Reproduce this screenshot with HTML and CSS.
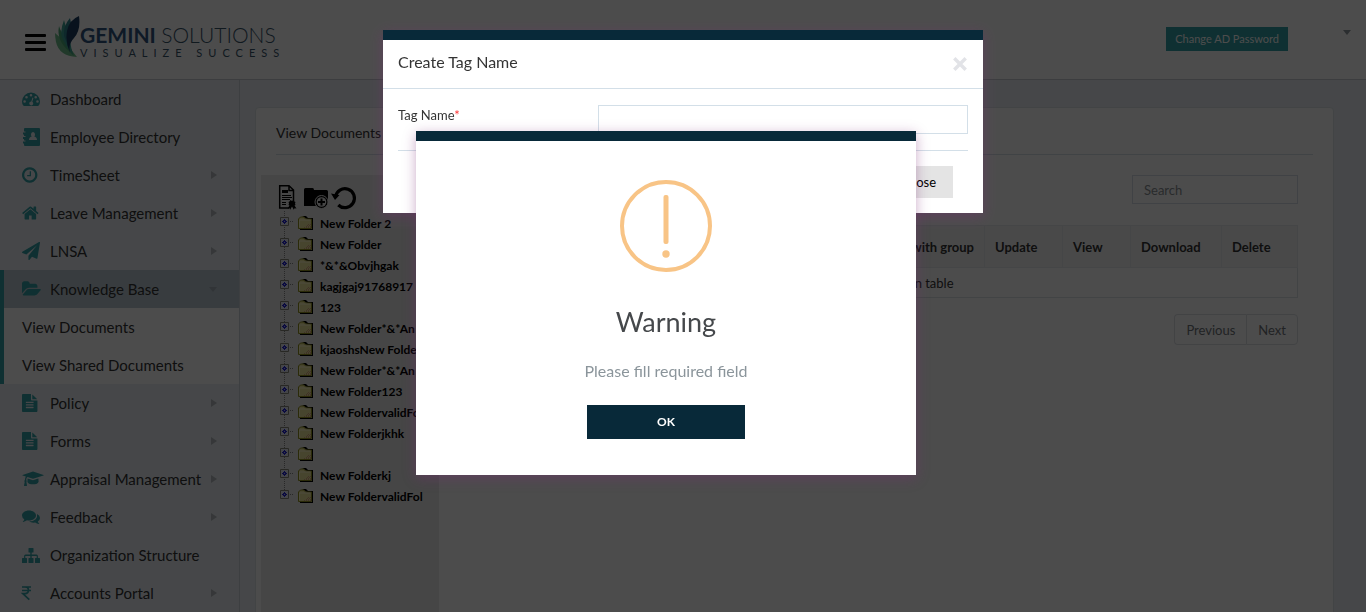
FILE: index.html
```html
<!DOCTYPE html>
<html lang="en">
<head>
<meta charset="utf-8">
<meta name="viewport" content="width=device-width, initial-scale=1">
<title>View Documents</title>
<link rel="stylesheet" href="styles.css">
</head>
<body>
<svg class="sprite" aria-hidden="true">
  <symbol id="i-dash" viewBox="0 0 18 18"><path fill-rule="evenodd" d="M0 11.500A9 9 0 1 1 18 11.500Q18 13.800 16.700 15.600Q16.400 16 16 16H2Q1.600 16 1.300 15.600Q0 13.800 0 11.500zM1.300 11.500a1.300 1.300 0 1 0 2.600 0a1.300 1.300 0 1 0-2.600 0zM3.200 7.200a1.300 1.300 0 1 0 2.600 0a1.300 1.300 0 1 0-2.600 0zM7.700 5.300a1.300 1.300 0 1 0 2.600 0a1.300 1.300 0 1 0-2.600 0zM12.400 7.200a1.300 1.300 0 1 0 2.600 0a1.300 1.300 0 1 0-2.600 0zM14.200 11.500a1.300 1.300 0 1 0 2.600 0a1.300 1.300 0 1 0-2.600 0zM10.500 7.600L9.300 11.400A2 2 0 1 0 10.300 11.700L11.400 7.900z"/></symbol>
  <symbol id="i-book" viewBox="0 0 18 18"><path fill-rule="evenodd" d="M3 0H17Q18 0 18 1V17Q18 18 17 18H3Q2 18 2 17V15.500H1V13.500H3.500V12.500H2V11H1V9H3.500V8H2V6.500H1V4.500H3.500V3.500H2V1Q2 0 3 0zM11 4A2.100 2.500 0 0 0 9.700 8.400Q7 9 7 12H15Q15 9 12.300 8.400A2.100 2.500 0 0 0 11 4z"/></symbol>
  <symbol id="i-clock" viewBox="128 0 1792 1792"><path d="M1024 544v448q0 14-9 23t-23 9h-320q-14 0-23-9t-9-23v-64q0-14 9-23t23-9h224v-352q0-14 9-23t23-9h64q14 0 23 9t9 23zm416 352q0-148-73-273t-198-198-273-73-273 73-198 198-73 273 73 273 198 198 273 73 273-73 198-198 73-273zm224 0q0 209-103 385.500t-279.500 279.500-385.500 103-385.500-103-279.500-279.500-103-385.500 103-385.500 279.500-279.500 385.500-103 385.500 103 279.500 279.500 103 385.500z"/></symbol>
  <symbol id="i-home" viewBox="64 0 1792 1792"><path d="M1472 992v480q0 26-19 45t-45 19h-384v-384h-256v384h-384q-26 0-45-19t-19-45v-480q0-1 .5-3t.5-3l575-474 575 474q1 2 1 6zm223-69l-62 74q-8 9-21 11h-3q-13 0-21-7l-692-577-692 577q-12 8-24 7-13-2-21-11l-62-74q-8-10-7-23.500t11-21.500l719-599q32-26 76-26t76 26l244 204v-195q0-14 9-23t23-9h192q14 0 23 9t9 23v408l219 182q10 8 11 21.500t-7 23.500z"/></symbol>
  <symbol id="i-plane" viewBox="0 0 1792 1792"><path d="M1764 11q33 24 27 64l-256 1536q-5 29-32 45-14 8-31 8-11 0-24-5l-453-185-242 295q-18 23-49 23-13 0-22-4-19-7-30.500-23.500t-11.500-36.500v-349l864-1059-1069 925-395-162q-37-14-40-55-2-40 32-59l1664-960q15-9 32-9 20 0 36 11z"/></symbol>
  <symbol id="i-open" viewBox="0 0 1792 1792"><path d="M1879 952q0 31-31 66l-336 396q-43 51-120.500 86.500t-143.500 35.500h-1088q-34 0-60.500-13t-26.500-43q0-31 31-66l336-396q43-51 120.500-86.500t143.500-35.500h1088q34 0 60.500 13t26.500 43zm-343-344v160h-832q-94 0-197 47.500t-164 119.500l-337 396-5 6q0-4-.5-12.500t-.5-12.500v-960q0-92 66-158t158-66h320q92 0 158 66t66 158v32h544q92 0 158 66t66 158z"/></symbol>
  <symbol id="i-file" viewBox="128 0 1792 1792"><path d="M1596 476q14 14 28 36h-472v-472q22 14 36 28zm-476 164h544v1056q0 40-28 68t-68 28h-1344q-40 0-68-28t-28-68v-1600q0-40 28-68t68-28h800v544q0 40 28 68t68 28zm160 736v-64q0-14-9-23t-23-9h-704q-14 0-23 9t-9 23v64q0 14 9 23t23 9h704q14 0 23-9t9-23zm0-256v-64q0-14-9-23t-23-9h-704q-14 0-23 9t-9 23v64q0 14 9 23t23 9h704q14 0 23-9t9-23zm0-256v-64q0-14-9-23t-23-9h-704q-14 0-23 9t-9 23v64q0 14 9 23t23 9h704q14 0 23-9t9-23z"/></symbol>
  <symbol id="i-cap" viewBox="0 0 18 18"><path d="M11 1.500L21.500 4.900Q22 5.200 21.500 5.500L11 8.700L5.500 7Q4.300 7.800 4.200 9.900Q5.200 10.800 4.400 11.900L5 15.600Q5 16 4.600 16H2.300Q1.900 16 2 15.600L2.700 11.900Q1.800 10.800 2.900 9.900Q3 7.600 3.900 6.500L.6 5.500Q0 5.200 .6 4.900zM5.600 8.600L11 10.300L16.400 8.600L16.600 11.700Q16.400 13.200 14.300 13.900Q11 14.800 7.700 13.900Q5.500 13.200 5.400 11.700z"/></symbol>
  <symbol id="i-chat" viewBox="0 0 18 18"><path d="M7 2.500C10.900 2.500 14 4.700 14 7.500S10.900 12.500 7 12.500Q6 12.500 5 12.300Q3.200 13.700 1 13.900Q.6 13.700 1 13.300Q2.100 12.500 2.300 11.200Q0 9.800 0 7.500C0 4.700 3.100 2.500 7 2.500zM15 6Q18 7.500 18 9.900Q18 12 15.800 13.400Q16 14.500 17.200 15.600Q17.500 16 17 16.100Q14.800 15.900 13.200 14.500Q9.600 15.100 7 13.500Q11.300 13.400 13.700 11.200Q15.700 9.300 15 6z"/></symbol>
  <symbol id="i-site" viewBox="0 0 18 18"><path d="M7 2H11Q11.500 2 11.500 2.500V6Q11.500 6.500 11 6.500H9.700V8.500H14.500Q15.900 8.500 15.900 10V12H17.300Q18 12 18 12.600V16.400Q18 17 17.400 17H13.600Q13 17 13 16.400V12.600Q13 12 13.600 12H14.700V10H9.700V12H11Q11.500 12 11.500 12.600V16.400Q11.500 17 11 17H7Q6.500 17 6.500 16.400V12.600Q6.500 12 7 12H8.300V10H3.300V12H4.400Q5 12 5 12.600V16.400Q5 17 4.400 17H.6Q0 17 0 16.400V12.600Q0 12 .6 12H2.100V10Q2.100 8.500 3.500 8.500H8.300V6.500H7Q6.500 6.500 6.500 6V2.500Q6.500 2 7 2z"/></symbol>
  <symbol id="i-inr" viewBox="0 0 18 18"><path fill="none" stroke="currentColor" stroke-width="1.700" d="M0 3H9M0 6.500H9M0 3H3Q6.500 3 6.500 6.300Q6.500 9.600 3 9.600H.8L7.300 15.700"/></symbol>
  <symbol id="i-folder" viewBox="0 0 16 14"><path fill="#000" d="M4 0h4l2 2h5v12H2v-1h12V3H9z"/><path fill="#efe69c" stroke="#8f8f20" d="M.5 12.500h13v-9.500h-6l-1.500-2h-3.500l-2 2z"/><path stroke="#fffbd0" fill="none" d="M1.500 11.500v-7.500h11"/><path stroke="#dba984" stroke-dasharray="1 1" d="M6 11.500h7M8 10.500h5M9 9.500h4M10 8.500h3"/></symbol>
  <symbol id="i-plus" viewBox="0 0 14 9"><path fill="#e4e6f4" stroke="#88887a" d="M.5.5h8v8h-8z"/><path fill="#2525d8" d="M4 2h1v1h1v1h1v1h-1v1h-1v1h-1v-1h-1v-1h-1v-1h1v-1h1z"/><path fill="#b9bbef" d="M4 4h1v1h-1z"/><path stroke="#888" stroke-dasharray="1 1" d="M10 4.500h4"/></symbol>
</svg>

<div class="app">
  <header class="top">
    <button class="burger" type="button" aria-label="Toggle menu"><span></span><span></span><span></span></button>
    <div class="logo">
      <svg class="leaf" viewBox="0 0 25 42" aria-hidden="true">
        <path fill="#6fc08c" d="M0 17Q9 24 22 41Q4 40 1 26Q0 21 0 17z"/>
        <path fill="#4dac79" d="M4 10Q1 25 15 36L19 40Q14 26 11 22Q6 17 4 10z"/>
        <path fill="#3fa497" d="M9 4Q4 17 8 24Q12 32 18 39Q14 25 16 19Q11 13 9 4z"/>
        <path fill="#2f8790" d="M15 2Q8 10 9 20Q13 30 14 31Q15 21 19 16Q16 10 15 2z"/>
        <path fill="#1c3f63" d="M24 0Q26 14 19 22Q13 28 15 37Q10 26 12 15Q14 4 24 0z"/>
      </svg>
      <div>
        <div class="brand"><b>GEMINI</b> <span>SOLUTIONS</span></div>
        <div class="tagline">VISUALIZE SUCCESS</div>
      </div>
    </div>
    <button class="password" type="button">Change AD Password</button>
    <button class="caret" type="button" aria-label="Account menu"></button>
  </header>

  <div class="body">
    <nav class="side">
      <a href="#"><svg><use href="#i-dash"/></svg>Dashboard</a>
      <a href="#"><svg><use href="#i-book"/></svg>Employee Directory</a>
      <a href="#" class="more"><svg><use href="#i-clock"/></svg>TimeSheet</a>
      <a href="#" class="more"><svg><use href="#i-home"/></svg>Leave Management</a>
      <a href="#" class="more"><svg><use href="#i-plane"/></svg>LNSA</a>
      <div class="group">
        <a href="#" class="more open"><svg><use href="#i-open"/></svg>Knowledge Base</a>
        <a href="#" class="sub">View Documents</a>
        <a href="#" class="sub">View Shared Documents</a>
      </div>
      <a href="#" class="more"><svg><use href="#i-file"/></svg>Policy</a>
      <a href="#" class="more"><svg><use href="#i-file"/></svg>Forms</a>
      <a href="#" class="more"><svg><use href="#i-cap"/></svg>Appraisal Management</a>
      <a href="#" class="more"><svg><use href="#i-chat"/></svg>Feedback</a>
      <a href="#"><svg><use href="#i-site"/></svg>Organization Structure</a>
      <a href="#" class="more"><svg><use href="#i-inr"/></svg>Accounts Portal</a>
    </nav>

    <main class="main">
      <section class="card">
        <h1>View Documents</h1>
        <div class="columns">
          <aside class="tree">
            <div class="tools">
              <button type="button" aria-label="Create tag"><svg viewBox="0 0 24 26"><path fill="none" stroke="#000" stroke-width="1.500" d="M17.500 17V6L13 1.700H3.700V24H13M13 2V6.500H17.500"/><path d="M6 6h6v3H6zM6 11h9v1H6zM6 13h10v1H6zM6 15h8v1H6zM6 18h4v1H6zM6 20h4v1H6z"/><path d="M14.500 16l1.500 1 1.500-1 1 1.500 1 .5-.5 1.500.5 1.500-1 .5 2 3-2-.3-.7 1.600-1.800-3.300-1.800 3.300-.7-1.600-2 .3 2-3-1-.5.500-1.500-.5-1.500 1-.5z"/></svg></button>
              <button type="button" aria-label="New folder"><svg viewBox="0 0 24 26"><path d="M0 5.500Q0 4 1.500 4H8.500Q10 4 10 6H22.500Q24 6 24 7.500V20H12V22H0z"/><circle cx="17.500" cy="18" r="6.500" stroke="#ececec" stroke-width="1"/><circle cx="17.500" cy="18" r="4.800" fill="#ececec"/><path stroke="#000" stroke-width="2" d="M17.500 14.500v7M14 18h7"/></svg></button>
              <button type="button" aria-label="Reload"><svg viewBox="0 0 24 26"><path fill="none" stroke="#000" stroke-width="3.200" d="M3.500 13A9.500 9.500 0 1 1 6.300 21"/><path d="M-1 9.500L7.500 11L3 16z"/></svg></button>
            </div>
            <ul>
              <li><svg class="plus"><use href="#i-plus"/></svg><svg class="fold"><use href="#i-folder"/></svg><a href="#">New Folder 2</a></li>
              <li><svg class="plus"><use href="#i-plus"/></svg><svg class="fold"><use href="#i-folder"/></svg><a href="#">New Folder</a></li>
              <li><svg class="plus"><use href="#i-plus"/></svg><svg class="fold"><use href="#i-folder"/></svg><a href="#">*&amp;*&amp;Obvjhgak</a></li>
              <li><svg class="plus"><use href="#i-plus"/></svg><svg class="fold"><use href="#i-folder"/></svg><a href="#">kagjgaj91768917</a></li>
              <li><svg class="plus"><use href="#i-plus"/></svg><svg class="fold"><use href="#i-folder"/></svg><a href="#">123</a></li>
              <li><svg class="plus"><use href="#i-plus"/></svg><svg class="fold"><use href="#i-folder"/></svg><a href="#">New Folder*&amp;*An</a></li>
              <li><svg class="plus"><use href="#i-plus"/></svg><svg class="fold"><use href="#i-folder"/></svg><a href="#">kjaoshsNew Folder</a></li>
              <li><svg class="plus"><use href="#i-plus"/></svg><svg class="fold"><use href="#i-folder"/></svg><a href="#">New Folder*&amp;*An</a></li>
              <li><svg class="plus"><use href="#i-plus"/></svg><svg class="fold"><use href="#i-folder"/></svg><a href="#">New Folder123</a></li>
              <li><svg class="plus"><use href="#i-plus"/></svg><svg class="fold"><use href="#i-folder"/></svg><a href="#">New FoldervalidFo</a></li>
              <li><svg class="plus"><use href="#i-plus"/></svg><svg class="fold"><use href="#i-folder"/></svg><a href="#">New Folderjkhk</a></li>
              <li><svg class="plus"><use href="#i-plus"/></svg><svg class="fold"><use href="#i-folder"/></svg></li>
              <li><svg class="plus"><use href="#i-plus"/></svg><svg class="fold"><use href="#i-folder"/></svg><a href="#">New Folderkj</a></li>
              <li><svg class="plus"><use href="#i-plus"/></svg><svg class="fold"><use href="#i-folder"/></svg><a href="#">New FoldervalidFol</a></li>
            </ul>
          </aside>
          <div class="docs">
            <input class="search" type="search" placeholder="Search" aria-label="Search">
            <table>
              <colgroup><col><col class="c-update"><col class="c-view"><col class="c-download"><col class="c-delete"></colgroup>
              <thead><tr><th class="end">Share with group</th><th>Update</th><th>View</th><th>Download</th><th>Delete</th></tr></thead>
              <tbody><tr><td colspan="5">No data available in table</td></tr></tbody>
            </table>
            <div class="pager"><button type="button">Previous</button><button type="button">Next</button></div>
          </div>
        </div>
      </section>
    </main>
  </div>
</div>

<div class="shade">
  <form class="modal" role="dialog" aria-labelledby="modal-title">
    <div class="modal-head">
      <h2 id="modal-title">Create Tag Name</h2>
      <button type="button" aria-label="Close dialog"><svg viewBox="0 0 14 14"><path d="M2 2L12 12M12 2L2 12"/></svg></button>
    </div>
    <div class="modal-body">
      <div class="field"><label for="tag">Tag Name<span>*</span></label><input id="tag" type="text"></div>
      <div class="actions"><button type="button">Close</button></div>
    </div>
  </form>
</div>

<div class="alert-layer">
  <div class="alert" role="alertdialog" aria-labelledby="alert-title">
    <svg viewBox="0 0 92 92" aria-hidden="true"><circle cx="46" cy="46" r="44" fill="none" stroke="#f8c486" stroke-width="4"/><rect x="43.500" y="15" width="5" height="49" rx="2" fill="#f8c486"/><circle cx="46" cy="74" r="3.700" fill="#f8c486"/></svg>
    <h2 id="alert-title">Warning</h2>
    <p>Please fill required field</p>
    <button type="button">OK</button>
  </div>
</div>
</body>
</html>
```
FILE: styles.css
```css
* { box-sizing: border-box; }
body { margin: 0; font: 13px/20px Lato, "Open Sans", sans-serif; color: #343434; }
h1, h2, p, ul { margin: 0; padding: 0; font-weight: 400; }
button, input { font: inherit; color: inherit; margin: 0; border-radius: 0; }
button { cursor: pointer; border: 0; background: none; padding: 0; }
a { color: inherit; text-decoration: none; }
.sprite { position: absolute; width: 0; height: 0; }
symbol { overflow: visible; }

.app { display: flex; flex-direction: column; height: 100vh; overflow: hidden; background: #eaeff3; }
.top { display: flex; align-items: flex-start; flex: none; height: 80px; padding: 0 15px 0 25px; background: #fff; border-bottom: 1px solid #c8cdd2; }
.burger { display: grid; gap: 4px; width: 21px; margin-top: 34px; }
.burger span { height: 3px; background: #000; border-radius: 1px; }
.logo { display: flex; margin: 16px auto 0 9px; }
.leaf { width: 25px; height: 42px; }
.brand { margin-top: 7px; font-size: 21px; line-height: 24px; white-space: nowrap; color: #38546a; }
.brand b { color: #2f567f; }
.brand span { font-weight: 300; }
.tagline { font-size: 11px; line-height: 12px; letter-spacing: 6px; color: #38546a; white-space: nowrap; }
.password { height: 24px; margin: 27px 55px 0 0; padding: 0 9px; background: #32a0a7; color: #fff; font-size: 11px; }
.caret { margin-top: 30px; border: 4px solid transparent; border-top: 5px solid #9299a0; border-bottom: 0; }

.body { display: flex; flex: 1; min-height: 0; }
.side { flex: none; width: 240px; border-right: 1px solid #ccd3d9; overflow: hidden; font-size: 15px; }
.side a { display: flex; align-items: center; gap: 10px; height: 38px; padding: 0 22px; color: #333; white-space: nowrap; }
.side svg { flex: none; width: 18px; height: 18px; overflow: visible; fill: #32a0a7; color: #32a0a7; }
.side .more::after { content: ""; margin-left: auto; border: 4px solid transparent; border-left: 6px solid #b4b9bf; border-right: 0; }
.side .more.open::after { border: 4px solid transparent; border-top: 5px solid #a3afb8; border-bottom: 0; }
.group { box-shadow: inset 4px 0 #32a0a7; background: linear-gradient(#fff, #fff) 4px 0 no-repeat; }
.side .open { margin-left: 4px; padding-left: 18px; background: #bccad3; }

.main { flex: 1; min-width: 0; padding: 27px 32px 0 15px; }
.card { min-height: 100%; padding: 0 5px; background: #fff; border: 1px solid #dde3e8; border-radius: 4px; }
.card h1 { margin: 0 15px 20px; padding: 15px 0 11px; font-size: 14px; border-bottom: 1px solid #d5dfe8; }
.columns { display: flex; gap: 27px; }
.tree { flex: none; width: 178px; min-height: 640px; padding: 9px 15px; background: #ececec; overflow: hidden; }
.tools { display: flex; gap: 4px; margin-bottom: 1px; }
.tools button { width: 24px; height: 26px; }
.tools svg { display: block; width: 24px; height: 26px; overflow: visible; }
.tree ul { list-style: none; padding-left: 4px; overflow: hidden; background: repeating-linear-gradient(#888 0 1px, transparent 1px 2px) 8px 0 / 1px 280px no-repeat; }
.tree li { display: flex; align-items: flex-start; height: 21px; padding-top: 3px; font-size: 12px; font-weight: 700; line-height: 20px; color: #000; white-space: nowrap; }
.plus { flex: none; width: 14px; height: 9px; margin: 3px 4px 0 0; }
.fold { flex: none; width: 16px; height: 14px; margin: 2px 6px 0 0; }
.docs { flex: 1; min-width: 0; padding-right: 30px; }
.search { display: block; width: 166px; height: 29px; margin: 0 0 21px auto; padding: 0 11px; border: 1px solid #d5dee6; background: #fff; font-size: 13px; }
.search::placeholder { color: #8a8f94; opacity: 1; }
table { width: 100%; table-layout: fixed; border-collapse: collapse; border: 1px solid #dde3e8; }
.c-update { width: 78px; }
.c-view { width: 68px; }
.c-download { width: 91px; }
.c-delete { width: 76px; }
th { height: 42px; padding: 0 10px; text-align: left; font-size: 13px; background: #f5f5f6; border: 1px solid #e6eaee; white-space: nowrap; }
th.end { text-align: right; }
td { height: 30px; padding: 0 10px; text-align: center; font-size: 13px; border-top: 1px solid #dde3e8; }
.pager { display: flex; justify-content: flex-end; margin-top: 16px; }
.pager button { height: 31px; padding: 0 11px; border: 1px solid #dde1e5; color: #6f7479; font-size: 13px; }
.pager button:first-child { border-radius: 4px 0 0 4px; border-right: 0; }
.pager button:last-child { border-radius: 0 4px 4px 0; }

.shade, .alert-layer { position: fixed; inset: 0; display: flex; justify-content: center; align-items: flex-start; }
.shade { padding-top: 30px; background: rgba(0, 0, 0, .7); }
.alert-layer { padding: 131px 34px 0 0; }
.modal, .alert { background: #fff; border-top: 10px solid #082939; box-shadow: 0 3px 12px rgba(125, 45, 120, .4); }
.modal { width: 600px; }
.modal-head { display: flex; justify-content: space-between; align-items: center; height: 49px; padding: 0 15px; border-bottom: 1px solid #d3dfe8; }
.modal-head h2 { font-size: 16px; padding-bottom: 4px; }
.modal-head button { width: 16px; height: 16px; }
.modal-head svg { display: block; width: 16px; height: 16px; stroke: #e2e3e7; stroke-width: 3; }
.modal-body { padding: 16px 15px 15px; }
.field { display: flex; justify-content: space-between; padding-bottom: 16px; border-bottom: 1px solid #d3dfe8; }
.field label span { color: #f33; }
.field input { width: 370px; height: 29px; padding: 0 10px; border: 1px solid #d3dfe8; }
.actions { display: flex; justify-content: flex-end; padding: 15px 15px 0 0; }
.actions button { height: 32px; padding: 0 17px; background: #e4e4e4; color: #000; font-size: 13px; }
.alert { display: flex; flex-direction: column; align-items: center; width: 500px; padding: 39px 20px 36px; text-align: center; }
.alert svg { width: 92px; height: 92px; }
.alert h2 { margin-top: 30px; font-size: 27px; line-height: 40px; color: #45484b; }
.alert p { margin-top: 20px; font-size: 16px; line-height: 18px; color: #8b959b; }
.alert button { width: 158px; height: 34px; margin-top: 25px; background: #082939; color: #fff; font-size: 12px; font-weight: 700; }
```
